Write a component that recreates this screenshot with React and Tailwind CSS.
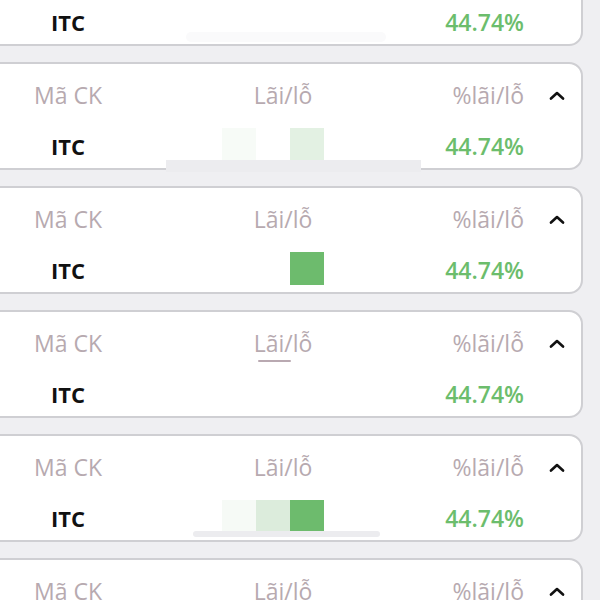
import React from "react";

const Chevron = () => (
  <svg width="16" height="10" viewBox="0 0 16 10" fill="none">
    <polyline points="2,8.5 8,3 14,8.5" stroke="#111" strokeWidth="2.6" strokeLinecap="round" strokeLinejoin="round" />
  </svg>
);

function Card({ squares = [null, null, null], band = null, underline = false }) {
  return (
    <div className="relative -ml-4 h-[108px] w-[599px] shrink-0 rounded-[14px] border-2 border-[#cfcfd3] bg-white">
      <div className="flex h-[28px] items-center mt-[17px] text-[23px] leading-[28px] text-[#b7aab0]">
        <div className="ml-[32px] w-[100px] text-center">Mã CK</div>
        <div className="relative ml-[115px] w-[100px] text-center">
          Lãi/lỗ
          {underline && (
            <div className="absolute left-[25px] top-[31px] h-[2px] w-[33px] rounded-full bg-[#b9a9b1]" />
          )}
        </div>
        <div className="ml-[71px] w-[120px] text-right">%lãi/lỗ</div>
        <div className="ml-[25px] flex w-[16px] items-center">
          <Chevron />
        </div>
      </div>
      <div className="mt-[23px] flex h-[28px] items-center text-[22px] leading-[28px]">
        <div className="ml-[32px] w-[100px] text-center font-bold text-[#111]">ITC</div>
        <div className="ml-[115px] flex w-[100px] items-center">
          <div className="-ml-[11px] mt-[-4px] flex">
            {squares.map((c, i) => (
              <div key={i} className="h-[33px] w-[34px]" style={{ background: c || "transparent" }} />
            ))}
          </div>
        </div>
        <div className="ml-[71px] w-[120px] text-right text-[23px] font-semibold text-[#6cbd6c]">44.74%</div>
      </div>
      {band}
    </div>
  );
}

export default function App() {
  return (
    <div
      className="h-[600px] w-[600px] overflow-hidden bg-[#efeff2]"
      style={{ fontFamily: '"Open Sans", "Noto Sans", sans-serif' }}
    >
      <div className="-mt-[62px] flex flex-col gap-[16px]">
        <Card
          band={<div className="absolute left-[200px] top-[92px] h-[10px] w-[200px] rounded-full bg-[#fafafb]" />}
        />
        <Card
          squares={["#f7fbf7", null, "#e3f1e3"]}
          band={<div className="absolute left-[180px] top-[96px] h-[12px] w-[255px] bg-[#ececef]" />}
        />
        <Card squares={[null, null, "#6dbb6d"]} />
        <Card underline />
        <Card
          squares={["#f6faf6", "#dcecdc", "#6dbb6d"]}
          band={<div className="absolute left-[207px] top-[95px] h-[6px] w-[187px] rounded-full bg-[#ececef]" />}
        />
        <Card />
      </div>
    </div>
  );
}
